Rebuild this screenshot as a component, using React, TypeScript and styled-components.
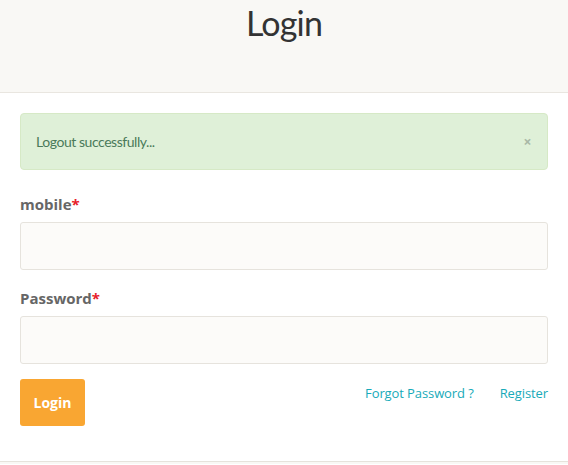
import React from "react";
import styled, { createGlobalStyle } from "styled-components";

const Global = createGlobalStyle`
  html, body { margin: 0; padding: 0; background: #fff; }
  body { font-family: "Open Sans", "Liberation Sans", sans-serif; }
  * { box-sizing: border-box; }
`;

const Header = styled.header`
  height: 93px;
  background: #f9f8f5;
  border-bottom: 1px solid #e9e6e0;
  display: flex;
  justify-content: center;
`;

const Title = styled.h1`
  margin: 0;
  padding-top: 1px;
  font-family: Lato, "Noto Sans", sans-serif;
  font-weight: 400;
  font-size: 34px;
  line-height: 44px;
  letter-spacing: -0.8px;
  color: #333;
`;

const Main = styled.main`
  padding: 20px 20px 0;
  height: 369px;
  border-bottom: 1px solid #e6e3dc;
`;

const Alert = styled.div`
  height: 57px;
  background: #dff0d8;
  border: 1px solid #d6e9c6;
  border-radius: 4px;
  display: flex;
  align-items: center;
  justify-content: space-between;
  padding: 0 16px 0 15px;
  color: #4a7a5a;
  font-family: Lato, "Noto Sans", sans-serif;
  font-size: 14px;
  letter-spacing: -0.45px;
  margin-bottom: 24px;
`;

const Close = styled.span`
  color: #a9b8a6;
  font-size: 14px;
  font-weight: 700;
  font-family: "Open Sans", sans-serif;
`;

const Field = styled.div`
  margin-bottom: 18px;
`;

const Label = styled.label`
  display: block;
  font-weight: 700;
  font-size: 15px;
  line-height: 20px;
  color: #666;
  margin-bottom: 8px;
`;

const Req = styled.span`
  color: #e8202a;
`;

const Input = styled.input`
  display: block;
  width: 100%;
  height: 48px;
  background: #fcfbf9;
  border: 1px solid #e6e3dd;
  border-radius: 3px;
  outline: none;
`;

const Actions = styled.div`
  display: flex;
  align-items: flex-start;
  justify-content: space-between;
  margin-top: -3px;
`;

const Button = styled.button`
  width: 65px;
  height: 47px;
  background: #f9a632;
  border: none;
  border-radius: 3px;
  color: #fff;
  font-family: "Open Sans", sans-serif;
  font-weight: 700;
  font-size: 14px;
`;

const Links = styled.div`
  display: flex;
  gap: 26px;
  padding-top: 5px;
`;

const Link = styled.a`
  color: #17aab9;
  font-size: 13px;
  line-height: 18px;
  letter-spacing: -0.1px;
  text-decoration: none;
`;

const Footer = styled.div`
  height: 2px;
  background: #f9f8f5;
`;

export default function App() {
  return (
    <>
      <Global />
      <Header>
        <Title>Login</Title>
      </Header>
      <Main>
        <Alert>
          <span>Logout successfully...</span>
          <Close>×</Close>
        </Alert>
        <Field>
          <Label>
            mobile<Req>*</Req>
          </Label>
          <Input type="text" />
        </Field>
        <Field>
          <Label>
            Password<Req>*</Req>
          </Label>
          <Input type="password" />
        </Field>
        <Actions>
          <Button>Login</Button>
          <Links>
            <Link href="#">Forgot Password ?</Link>
            <Link href="#">Register</Link>
          </Links>
        </Actions>
      </Main>
      <Footer />
    </>
  );
}
